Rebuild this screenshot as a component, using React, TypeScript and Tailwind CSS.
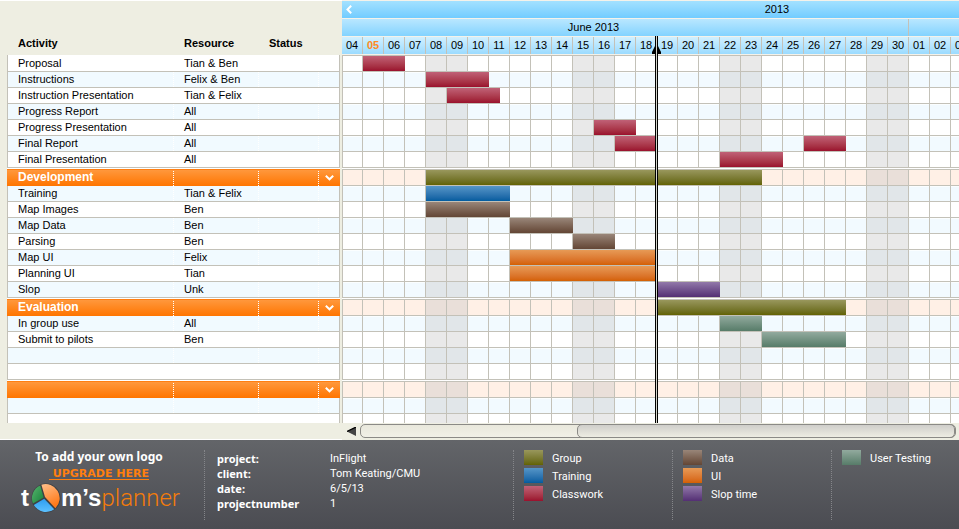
import React from "react";

type Kind = "group" | "training" | "classwork" | "data" | "ui" | "slop" | "testing";

type Bar = { start: number; days: number; kind: Kind };

type Row = {
  group?: boolean;
  activity: string;
  resource?: string;
  tinted?: boolean;
  bars?: Bar[];
};

const DAY_WIDTH = 21;
const FIRST_DAY = 4;

const fills: Record<Kind, string> = {
  group: "bg-linear-to-b from-[#99975c] to-[#636300]",
  training: "bg-linear-to-b from-[#5596c8] to-[#015c9f]",
  classwork: "bg-linear-to-b from-[#c06177] to-[#9a0f2d]",
  data: "bg-linear-to-b from-[#998679] to-[#634635]",
  ui: "bg-linear-to-b from-[#e79a55] to-[#d46000]",
  slop: "bg-linear-to-b from-[#9279a9] to-[#542f74]",
  testing: "bg-linear-to-b from-[#92aa9e] to-[#577c69]",
};

const rows: Row[] = [
  { activity: "Proposal", resource: "Tian & Ben", bars: [{ start: 5, days: 2, kind: "classwork" }] },
  { activity: "Instructions", resource: "Felix & Ben", tinted: true, bars: [{ start: 8, days: 3, kind: "classwork" }] },
  { activity: "Instruction Presentation", resource: "Tian & Felix", bars: [{ start: 9, days: 2.5, kind: "classwork" }] },
  { activity: "Progress Report", resource: "All", tinted: true },
  { activity: "Progress Presentation", resource: "All", bars: [{ start: 16, days: 2, kind: "classwork" }] },
  {
    activity: "Final Report",
    resource: "All",
    tinted: true,
    bars: [
      { start: 17, days: 2, kind: "classwork" },
      { start: 26, days: 2, kind: "classwork" },
    ],
  },
  { activity: "Final Presentation", resource: "All", bars: [{ start: 22, days: 3, kind: "classwork" }] },
  { group: true, activity: "Development", bars: [{ start: 8, days: 16, kind: "group" }] },
  { activity: "Training", resource: "Tian & Felix", tinted: true, bars: [{ start: 8, days: 4, kind: "training" }] },
  { activity: "Map Images", resource: "Ben", bars: [{ start: 8, days: 4, kind: "data" }] },
  { activity: "Map Data", resource: "Ben", tinted: true, bars: [{ start: 12, days: 3, kind: "data" }] },
  { activity: "Parsing", resource: "Ben", bars: [{ start: 15, days: 2, kind: "data" }] },
  { activity: "Map UI", resource: "Felix", tinted: true, bars: [{ start: 12, days: 7, kind: "ui" }] },
  { activity: "Planning UI", resource: "Tian", bars: [{ start: 12, days: 7, kind: "ui" }] },
  { activity: "Slop", resource: "Unk", tinted: true, bars: [{ start: 19, days: 3, kind: "slop" }] },
  { group: true, activity: "Evaluation", bars: [{ start: 19, days: 9, kind: "group" }] },
  { activity: "In group use", resource: "All", tinted: true, bars: [{ start: 22, days: 2, kind: "testing" }] },
  { activity: "Submit to pilots", resource: "Ben", bars: [{ start: 24, days: 4, kind: "testing" }] },
  { activity: "", tinted: true },
  { activity: "" },
  { group: true, activity: "" },
  { activity: "", tinted: true },
  { activity: "" },
];

// June 4 to July 31; a day number above 30 falls in July.
const days = Array.from({ length: 58 }, (_, i) => FIRST_DAY + i);
const isWeekend = (day: number) => day % 7 === 1 || day % 7 === 2;
const dayLabel = (day: number) => String(day > 30 ? day - 30 : day).padStart(2, "0");

function Chevron() {
  return (
    <svg width="9" height="6" viewBox="0 0 9 6" fill="none" stroke="#fff" strokeWidth="2" aria-hidden="true">
      <path d="M0.8 0.8 L4.5 4.3 L8.2 0.8" />
    </svg>
  );
}

function ActivityTable() {
  const head = "h-[55px] pt-[31px] pl-[10px] pb-0 text-left align-top leading-6 font-bold";
  return (
    <table className="w-[333px] table-fixed border-separate border-spacing-0 text-[11px] leading-[15px]">
      <colgroup>
        <col className="w-[167px]" />
        <col className="w-[85px]" />
        <col className="w-[60px]" />
        <col className="w-[21px]" />
      </colgroup>
      <thead>
        <tr>
          <th scope="col" className={head + " border-l border-transparent"}>Activity</th>
          <th scope="col" className={head}>Resource</th>
          <th scope="col" className={head}>Status</th>
          <td className="p-0" />
        </tr>
      </thead>
      <tbody>
        {rows.map((row, i) => {
          if (row.group) {
            const cell =
              "h-[18px] border-t border-t-white bg-clip-padding bg-no-repeat p-0 shadow-[inset_0_1px_0_#ff7f12] ";
            const plain = cell + "bg-[linear-gradient(#ff9a40,#ff7500)]";
            const split =
              cell +
              "bg-[repeating-linear-gradient(#fff_0_1px,transparent_1px_2px),linear-gradient(#ff9a40,#ff7500)] [background-size:1px_100%,100%_100%] [background-position:right_top,left_top]";
            return (
              <tr key={i}>
                <td className={split + " pl-[11px] text-[12px] font-bold text-white"}>{row.activity}</td>
                <td className={split} />
                <td className={split} />
                <td className={plain}>
                  <button type="button" aria-label="Collapse group" className="flex h-[16px] w-full items-center justify-center pt-px">
                    <Chevron />
                  </button>
                </td>
              </tr>
            );
          }
          const cell =
            "border-b border-b-[#c3c1b8] p-0 whitespace-nowrap " +
            (i === 0 ? "h-[17px] pt-px " : "h-[16px] ") +
            (row.tinted ? "bg-[#f1faff]" : "bg-white");
          const split =
            " bg-[repeating-linear-gradient(#fff_0_1px,transparent_1px_2px)] bg-no-repeat [background-size:1px_100%] [background-position:right_top]";
          return (
            <tr key={i}>
              <td className={cell + split + " border-l border-l-[#c3c1b8] pl-[10px]"}>{row.activity}</td>
              <td className={cell + split + " pl-[10px]"}>{row.resource}</td>
              <td className={cell + split} />
              <td className={cell + " border-r border-r-[#c3c1b8]"} />
            </tr>
          );
        })}
      </tbody>
    </table>
  );
}

function TimelineHeader() {
  return (
    <div className="flex flex-col gap-px border-y border-[#f4f2ea] bg-[#f4f2ea] text-[11px]">
      <div className="flex h-[17px] bg-linear-to-b from-[#a3e1ff] to-[#71ccff]">
        <button type="button" aria-label="Earlier" className="flex w-[13px] shrink-0 items-center justify-center">
          <svg width="6" height="9" viewBox="0 0 6 9" fill="none" stroke="#fff" strokeWidth="2" aria-hidden="true">
            <path d="M5.2 0.8 L1.5 4.5 L5.2 8.2" />
          </svg>
        </button>
        <div className="w-[844px] shrink-0 text-center leading-[17px]">2013</div>
      </div>
      <div className="flex h-[17px] bg-linear-to-b from-[#b9e7ff] to-[#82d3ff]">
        <div className="-ml-[63px] w-[630px] shrink-0 border-r border-[#c3c1b8] text-center leading-[17px]">June 2013</div>
      </div>
      <div className="flex h-[17px] bg-linear-to-b from-[#d1f0ff] to-[#9bdbff]">
        {days.map((day) => (
          <div
            key={day}
            className={
              "w-[21px] shrink-0 border-r border-[#c3c1b8] text-center leading-[17px] " +
              (day === 5 ? "font-bold text-[#ff8a22]" : "")
            }
          >
            {dayLabel(day)}
          </div>
        ))}
      </div>
    </div>
  );
}

function cellFill(row: Row, weekend: boolean) {
  if (row.group) return weekend ? "bg-[#e9dfd9]" : "bg-[#fff0e6]";
  if (row.tinted) return weekend ? "bg-[#e1e6e9]" : "bg-[#f2faff] shadow-[inset_0_1px_0_#fbfeff]";
  return weekend ? "bg-[#e9e9e9]" : "bg-white";
}

function TimelineRow({ row }: { row: Row }) {
  return (
    <div
      className={
        "flex shrink-0 border-b border-[#c3c1b8] " + (row.group ? "mt-px h-[17px] border-t" : "h-[16px]")
      }
    >
      {days.map((day, i) => (
        <div
          key={day}
          className={
            "relative w-[21px] shrink-0 border-r border-[#c3c1b8] " +
            (i === 0 ? "border-l " : "") +
            cellFill(row, isWeekend(day))
          }
        >
          {row.bars
            ?.filter((bar) => bar.start === day)
            .map((bar) => (
              <div
                key={bar.start}
                className={"absolute inset-y-0 left-0 z-10 " + fills[bar.kind]}
                style={{ width: Math.round(bar.days * DAY_WIDTH) }}
              />
            ))}
        </div>
      ))}
    </div>
  );
}

function DateMarker() {
  return (
    <div className="absolute top-[36px] bottom-0 left-[310px] z-20 flex w-[9px] justify-center" aria-hidden="true">
      <div className="w-[3px] border-x border-black bg-[#d5d5cb]" />
      <svg className="absolute top-[10px] left-0" width="9" height="8" viewBox="0 0 9 8">
        <path d="M3 0 V8 H0 V6 Z M6 0 V8 H9 V6 Z" fill="#000" />
      </svg>
    </div>
  );
}

function ScrollBar() {
  return (
    <div className="flex h-[17px] shrink-0">
      <div className="w-[342px] shrink-0 border-b border-white" />
      <button type="button" aria-label="Scroll left" className="flex w-[18px] items-center justify-center">
        <svg width="9" height="9" viewBox="0 0 9 9" aria-hidden="true">
          <path d="M0 4.5 L9 0 V9 Z" fill="#444" />
          <path d="M0 4.5 L9 0" stroke="#000" strokeWidth="1.2" />
        </svg>
      </button>
      <div
        role="scrollbar"
        aria-controls="timeline"
        aria-orientation="horizontal"
        aria-valuenow={100}
        className="mt-px mr-[3px] flex h-[14px] flex-1 justify-end rounded-[5px] border border-[#8b8a86] bg-linear-to-b from-[#e9e8dc] to-[#f1f0e7]"
      >
        <div className="-my-px h-[14px] w-7/11 rounded-[5px] border border-[#8b8a86] bg-linear-to-b from-[#cfceca] to-[#eeede3]" />
      </div>
    </div>
  );
}

function Logo() {
  return (
    <div className="flex items-center pl-[21px] font-['Liberation_Sans',sans-serif] text-[24px] leading-[30px]" aria-label="tom's planner">
      <span className="w-[10px] font-bold text-white">t</span>
      <svg width="30" height="30" viewBox="0 0 30 30" aria-hidden="true">
        <defs>
          <linearGradient id="logo-green" x1="0" y1="0" x2="1" y2="1">
            <stop offset="0" stopColor="#59b56e" />
            <stop offset="1" stopColor="#15803a" />
          </linearGradient>
          <linearGradient id="logo-orange" x1="0" y1="0" x2="0.4" y2="1">
            <stop offset="0" stopColor="#ffc08c" />
            <stop offset="1" stopColor="#ff7a1a" />
          </linearGradient>
          <linearGradient id="logo-blue" x1="0" y1="0" x2="0" y2="1">
            <stop offset="0" stopColor="#2d9df0" />
            <stop offset="1" stopColor="#5cc0ff" />
          </linearGradient>
        </defs>
        <circle cx="15" cy="15" r="14.5" fill="#3d4043" />
        <path d="M12.6 14.4 L9.2 2.4 A14 14 0 0 0 2 20.4 Z" fill="url(#logo-green)" />
        <path d="M14 14 L10.4 1.8 A14 14 0 0 1 24.4 25.2 Z" fill="url(#logo-orange)" />
        <path d="M13.2 15.8 L23.2 26.2 A14 14 0 0 1 2.8 22 Z" fill="url(#logo-blue)" />
      </svg>
      <span className="font-bold text-white">m’s</span>
      <span className="font-['Roboto','Liberation_Sans',sans-serif] font-light text-[#f57c0a]">planner</span>
    </div>
  );
}

const legend: { label: string; kind: Kind }[][] = [
  [
    { label: "Group", kind: "group" },
    { label: "Training", kind: "training" },
    { label: "Classwork", kind: "classwork" },
  ],
  [
    { label: "Data", kind: "data" },
    { label: "UI", kind: "ui" },
    { label: "Slop time", kind: "slop" },
  ],
  [{ label: "User Testing", kind: "testing" }],
];

const details = [
  ["project:", "InFlight"],
  ["client:", "Tom Keating/CMU"],
  ["date:", "6/5/13"],
  ["projectnumber", "1"],
];

function Footer() {
  return (
    <footer className="flex shrink-0 bg-linear-to-b from-[#636569] to-[#4b4c52] pt-[10px] pb-[9px] font-['Roboto','Noto_Sans',sans-serif] text-[11px] text-white">
      <div className="flex w-[204px] shrink-0 flex-col">
        <div className="flex flex-col items-center pr-[6px] font-bold">
          <span className="font-['Noto_Sans',sans-serif] text-[12px] leading-[14px]">To add your own logo</span>
          <a
            href="#upgrade"
            className="pt-px font-['DejaVu_Sans',sans-serif] text-[11px] leading-[18px] whitespace-pre text-[#ff7f0e] underline underline-offset-2"
          >
            {" UPGRADE HERE"}
          </a>
        </div>
        <Logo />
      </div>
      <dl className="h-[70px] flex-1 border-l border-dotted border-[#85868a] pt-px pl-[12px] leading-[15px]">
        {details.map(([name, value]) => (
          <div key={name} className="flex">
            <dt className="w-[113px] shrink-0 font-['Noto_Sans',sans-serif] font-bold">{name}</dt>
            <dd>{value}</dd>
          </div>
        ))}
      </dl>
      {legend.map((column, i) => (
        <ul
          key={i}
          className={
            "flex h-[70px] shrink-0 flex-col gap-[3px] border-l border-dotted border-[#85868a] pl-[10px] " +
            (i === 2 ? "w-[128px]" : "w-[159px]")
          }
        >
          {column.map((item) => (
            <li key={item.label} className="flex h-[15px] items-center gap-[9px] leading-[17px]">
              <span className={"h-[15px] w-[19px] " + fills[item.kind]} />
              <span className="pt-px">{item.label}</span>
            </li>
          ))}
        </ul>
      ))}
    </footer>
  );
}

export default function App() {
  return (
    <div className="flex h-screen flex-col overflow-hidden bg-[#eeeee2] font-['Liberation_Sans',Arial,sans-serif] text-black">
      <main className="flex min-h-0 flex-1 overflow-hidden">
        <div className="w-[342px] shrink-0 border-t border-white pl-[7px]">
          <div className="-mt-px">
            <ActivityTable />
          </div>
        </div>
        <div id="timeline" className="relative min-w-0 flex-1 overflow-hidden bg-white">
          <TimelineHeader />
          <div className="border-t border-[#c3c1b8]">
            {rows.map((row, i) => (
              <TimelineRow key={i} row={row} />
            ))}
          </div>
          <DateMarker />
        </div>
      </main>
      <ScrollBar />
      <Footer />
    </div>
  );
}
